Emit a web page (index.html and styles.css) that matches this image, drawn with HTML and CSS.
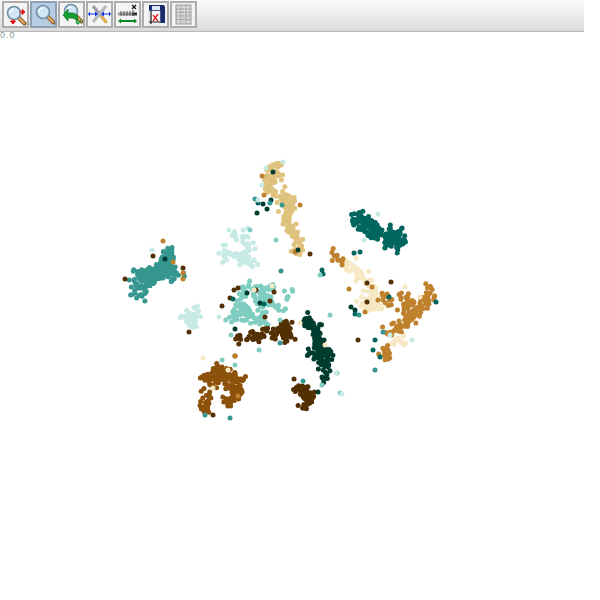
FILE: index.html
```html
<!DOCTYPE html>
<html lang="en">
<head>
    <meta charset="UTF-8">
    <title>Scatter plot</title>
    <link rel="stylesheet" href="styles.css">
</head>
<body>

    <svg class="defs" width="0" height="0">
        <symbol id="lens" viewBox="0 0 23 23">
            <line x1="14" y1="14" x2="20.5" y2="20.5" stroke="#8a5a2a" stroke-width="4" stroke-linecap="round"/>
            <line x1="14" y1="14" x2="20" y2="20" stroke="#e8a860" stroke-width="2.2" stroke-linecap="round"/>
            <circle cx="10" cy="10" r="6.5" fill="#cfe6f5" stroke="#6f8fa8" stroke-width="1.6"/>
            <path d="M6 10a4 4 0 0 1 4-4" fill="none" stroke="#fff" stroke-width="1.4"/>
        </symbol>
    </svg>

    <div class="toolbar">
        <button class="tool">
            <svg width="23" height="23" viewBox="0 0 23 23">
                <use href="#lens"/>
                <path d="M15 9h4M18 6.500l3 2.500-3 2.500z" fill="#e01010" stroke="#e01010"/>
                <path d="M9 16v3M6.500 18l2.500 3 2.500-3z" fill="#e01010" stroke="#e01010"/>
            </svg>
        </button>
        <button class="tool active">
            <svg width="23" height="23" viewBox="0 0 23 23">
                <use href="#lens" x="1" y="-1"/>
            </svg>
        </button>
        <button class="tool">
            <svg width="23" height="23" viewBox="0 0 23 23">
                <use href="#lens" x="1" y="-2"/>
                <path d="M3 12l5-6v4h4c4 0 6 3 6 6l-1 3c-1-3-3-4-6-4H8v3z" fill="#12a030" stroke="#0b6a20" stroke-width=".7"/>
                <path d="M16 19l2 2 3-4" fill="none" stroke="#12a030" stroke-width="1.4"/>
            </svg>
        </button>
        <button class="tool">
            <svg width="23" height="23" viewBox="0 0 23 23">
                <path d="M5 3l13 16" stroke="#9aa0a8" stroke-width="3"/>
                <path d="M18 3L5 19" stroke="#b4b8be" stroke-width="3"/>
                <path d="M13 13l6 7" stroke="#e8b040" stroke-width="2.600"/>
                <path d="M1 11h7M15 11h7" stroke="#1030e0" stroke-width="1.200"/>
                <path d="M2 8.500v5l-2-2.500zM10 11L7 8.500v5zM13 11l3-2.500v5zM21 8.500v5l2-2.500z" fill="#1030e0"/>
            </svg>
        </button>
        <button class="tool">
            <svg width="23" height="23" viewBox="0 0 23 23">
                <path d="M2 11h14" stroke="#9a9a9a" stroke-width="3"/>
                <path d="M16 11h5" stroke="#333" stroke-width="3"/>
                <path d="M5 8v5M8 8v5M11 8v5M14 8v5M17 7v6" stroke="#555" stroke-width="1"/>
                <path d="M16 2l4 4M20 2l-4 4" stroke="#111" stroke-width="1.200"/>
                <path d="M4 18h15" stroke="#0a8a20" stroke-width="2"/>
                <path d="M5 15.500v5l-3-2.500zM18 15.500v5l3-2.500z" fill="#0a8a20"/>
            </svg>
        </button>
        <button class="tool">
            <svg width="23" height="23" viewBox="0 0 23 23">
                <path d="M5 2h15l1 2v16h-6V9H5z" fill="#1a2a6a"/>
                <rect x="8" y="3" width="8" height="4" fill="#dfe6f2"/>
                <rect x="5" y="8" width="11" height="14" fill="#fff" stroke="#c8c8d8" stroke-width=".6"/>
                <path d="M7 8v13M5 19h11" stroke="#111" stroke-width="1.200"/>
                <path d="M9 18l5-7M9 12l5 6" stroke="#e01818" stroke-width="1.300"/>
            </svg>
        </button>
        <button class="tool">
            <svg width="23" height="23" viewBox="0 0 23 23">
                <rect x="4" y="2" width="15" height="19" fill="#d4d4d4" stroke="#9a9a9a"/>
                <path d="M4 6h15M4 9.500h15M4 13h15M4 16.500h15M9 2v19M14 2v19" stroke="#9a9a9a" stroke-dasharray="2 1"/>
            </svg>
        </button>
    </div>

    <main class="plot">
        <span class="tick">0.0</span>
        <svg id="points" class="points" viewBox="0 32 600 568" width="600" height="568"></svg>
    </main>

    <script src="plot.js"></script>
</body>
</html>
```

FILE: styles.css
```css
/* Reset default styles */
body {
    margin: 0;
    background: #fff;
    font-family: "Liberation Sans", sans-serif;
    overflow: hidden;
}

.defs {
    position: absolute;
}

/* Toolbar */
.toolbar {
    display: flex;
    gap: 1px;
    width: 582px;
    height: 29px;
    padding: 1px 0 0 2px;
    background: linear-gradient(#fbfbfb, #dcdcdc);
    border-bottom: 1px solid #d8d8d8;
    box-shadow: 0 1px 0 #b8b8b8;
}

.tool {
    width: 27px;
    height: 27px;
    padding: 0;
    display: flex;
    background: #f4f4f4;
    border: 2px solid #adadad;
}

.tool.active {
    background: #b7cde4;
    border-color: #8e9fb2;
}

/* Plot area */
.plot {
    position: relative;
    margin-top: 1px;
    height: 568px;
}

.points {
    display: block;
}

.tick {
    position: absolute;
    left: 0;
    top: 0;
    font-size: 9px;
    line-height: 6px;
    letter-spacing: 1px;
    color: #8a9c9a;
}
```

FILE: plot.js
```js
// BrBG classes, each one a few strokes that the dots scatter around
const clusters = [
    { color: "#dfc27d", n: 12, spread: 5, paths: [
        [[280, 166], [273, 168], [268, 180], [267, 188], [275, 192]],
        [[278, 172], [274, 182]],
        [[283, 192], [285, 205], [287, 222], [293, 234], [299, 243], [297, 253]],
        [[281, 200], [289, 198], [290, 212]]
    ]},
    { color: "#c7eae5", n: 8, spread: 5, paths: [
        [[230, 231], [236, 235]],
        [[243, 231], [248, 245], [243, 258], [250, 264]],
        [[225, 248], [224, 258], [230, 252]],
        [[240, 260], [255, 262]],
        [[237, 254], [245, 258]]
    ]},
    { color: "#c7eae5", n: 14, spread: 5.500, paths: [
        [[196, 310], [190, 320], [193, 329]],
        [[183, 318], [198, 318]]
    ]},
    { color: "#80cdc1", n: 8, spread: 5, paths: [
        [[243, 288], [262, 288], [272, 287]],
        [[244, 290], [243, 305], [235, 313], [250, 318], [263, 320]],
        [[262, 296], [270, 302], [280, 310]],
        [[270, 288], [258, 300], [266, 312]],
        [[292, 293], [287, 297]],
        [[228, 320], [234, 314]],
        [[262, 326], [262, 318]],
        [[238, 310], [252, 310]]
    ]},
    { color: "#35978f", n: 16, spread: 6.500, paths: [
        [[164, 251], [170, 258], [158, 272], [177, 273]],
        [[165, 262], [172, 280]],
        [[158, 270], [146, 276], [138, 291]],
        [[150, 272], [136, 277]],
        [[150, 283], [160, 268]],
        [[137, 291], [142, 293]]
    ]},
    { color: "#01665e", n: 14, spread: 6, paths: [
        [[363, 214], [355, 220], [373, 223], [378, 238]],
        [[362, 222], [372, 235]],
        [[376, 232], [397, 233], [404, 237], [397, 246]],
        [[383, 243], [395, 240]],
        [[390, 236], [398, 242]]
    ]},
    { color: "#f6e8c3", n: 10, spread: 5, paths: [
        [[344, 263], [352, 270], [362, 276], [372, 286], [380, 300]],
        [[360, 300], [370, 308], [382, 306]],
        [[366, 296], [376, 300]],
        [[392, 343], [406, 340]]
    ]},
    { color: "#bf812d", n: 11, spread: 5, paths: [
        [[428, 288], [431, 294], [426, 297]],
        [[402, 296], [410, 300], [404, 308], [414, 316], [400, 326], [386, 334]],
        [[431, 300], [414, 312]],
        [[384, 293], [389, 302]],
        [[333, 253], [339, 258]],
        [[387, 350], [384, 356], [391, 354]]
    ]},
    { color: "#8c510a", n: 12, spread: 5.500, paths: [
        [[217, 368], [205, 378], [218, 382], [230, 374], [242, 381]],
        [[220, 368], [228, 382], [236, 396], [224, 403]],
        [[240, 388], [234, 398]],
        [[206, 393], [207, 402], [203, 411]]
    ]},
    { color: "#543005", n: 13, spread: 4.800, paths: [
        [[235, 338], [240, 336]],
        [[250, 338], [258, 333], [262, 338]],
        [[268, 331], [280, 334], [288, 323], [290, 336], [282, 340]],
        [[297, 388], [310, 397], [303, 408]],
        [[298, 390], [316, 396]]
    ]},
    { color: "#003c30", n: 14, spread: 5.200, paths: [
        [[307, 317], [306, 323], [317, 328], [315, 340]],
        [[316, 340], [326, 358], [331, 353]],
        [[311, 352], [322, 360], [328, 368]],
        [[323, 376], [323, 380]]
    ]}
];

// single dots that landed away from their own class
const strays = {
    "#543005": [[125, 279], [153, 256], [183, 268], [234, 290], [238, 288], [222, 306], [230, 298], [256, 290], [274, 292], [270, 301], [310, 254], [367, 283], [391, 282], [367, 302], [235, 356], [213, 415], [294, 379], [189, 332], [265, 317], [358, 340]],
    "#bf812d": [[163, 241], [173, 262], [183, 273], [183, 279], [262, 176], [349, 289], [365, 312], [372, 287], [295, 252], [300, 205], [342, 265], [264, 195], [238, 396], [235, 356], [378, 300]],
    "#003c30": [[165, 259], [263, 204], [257, 213], [267, 209], [271, 200], [273, 172], [351, 307], [355, 310], [247, 293], [298, 250], [235, 329], [260, 303], [318, 392]],
    "#01665e": [[258, 203], [354, 253], [360, 252], [322, 270], [323, 274], [375, 340], [373, 350], [380, 357], [436, 302], [389, 297], [355, 314], [233, 299], [264, 304]],
    "#35978f": [[255, 199], [270, 203], [282, 205], [281, 271], [359, 315], [383, 332], [280, 343], [375, 370], [230, 418], [205, 415], [303, 381]],
    "#80cdc1": [[320, 275], [330, 315], [280, 320], [231, 335], [259, 350], [222, 360], [235, 365], [340, 393], [322, 385], [337, 373], [276, 240], [250, 230]],
    "#c7eae5": [[152, 250], [262, 185], [266, 168], [283, 162], [258, 200], [219, 317], [336, 373], [342, 394], [390, 335], [412, 340], [378, 214], [364, 240]],
    "#f6e8c3": [[203, 358], [325, 345], [356, 258], [420, 297], [405, 287], [228, 370], [213, 388], [300, 323], [254, 290], [272, 286]]
};

// small seeded generator so the picture stays the same on every load
let seed = 20240;
function rand() {
    seed = (seed * 16807) % 2147483647;
    return seed / 2147483647;
}

function gauss() {
    return (rand() + rand() + rand() - 1.5) / 0.87;
}

const svg = document.getElementById("points");

function addDot(x, y, color) {
    const dot = document.createElementNS("http://www.w3.org/2000/svg", "circle");
    dot.setAttribute("cx", x.toFixed(1));
    dot.setAttribute("cy", y.toFixed(1));
    dot.setAttribute("r", "2.5");
    dot.setAttribute("fill", color);
    svg.appendChild(dot);
}

clusters.forEach(function (cluster) {
    cluster.paths.forEach(function (path) {
        for (let i = 0; i < path.length - 1; i++) {
            const a = path[i];
            const b = path[i + 1];
            const steps = Math.max(4, Math.round(Math.hypot(b[0] - a[0], b[1] - a[1]) / 10 * cluster.n));
            for (let j = 0; j <= steps; j++) {
                const t = j / steps;
                addDot(
                    a[0] + (b[0] - a[0]) * t + gauss() * cluster.spread,
                    a[1] + (b[1] - a[1]) * t + gauss() * cluster.spread,
                    cluster.color
                );
            }
        }
    });
});

Object.keys(strays).forEach(function (color) {
    strays[color].forEach(function (p) {
        addDot(p[0], p[1], color);
    });
});
```
